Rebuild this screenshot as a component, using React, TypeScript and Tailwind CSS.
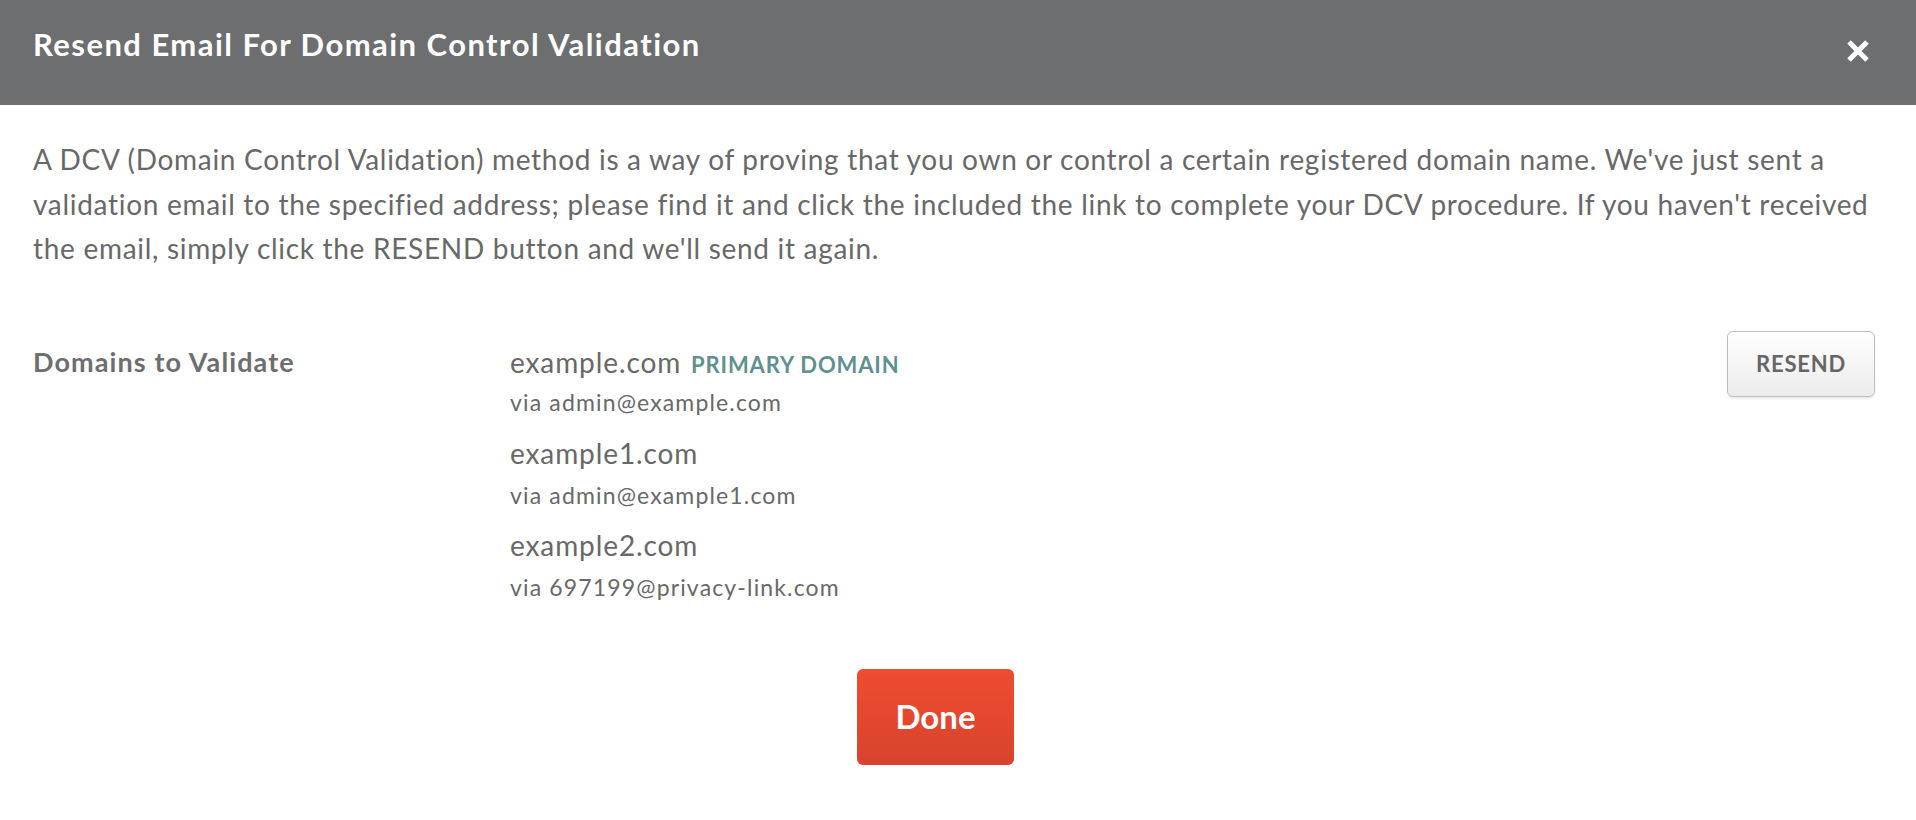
const domains = [
  { name: "example.com", via: "admin@example.com", primary: true },
  { name: "example1.com", via: "admin@example1.com", primary: false },
  { name: "example2.com", via: "697199@privacy-link.com", primary: false },
];

export default function App() {
  return (
    <div className="min-h-[820px] w-full bg-white font-['Lato',sans-serif] text-[#686868]">
      <header className="flex h-[105px] items-start justify-between bg-[#6d6e70] pl-[33px] pr-[46px]">
        <h1 className="pt-[25px] text-[31px] leading-[38px] font-bold tracking-[1.45px] text-white">
          Resend Email For Domain Control Validation
        </h1>
        <button className="mt-[39px] text-white" aria-label="Close">
          <svg width="24" height="24" viewBox="0 0 24 24">
            <path d="M3 3 L21 21 M21 3 L3 21" stroke="currentColor" strokeWidth="5" />
          </svg>
        </button>
      </header>

      <div className="px-[33px] pt-[32px]">
        <p className="text-[28px] leading-[44.5px] tracking-[0.7px]">
          A DCV (Domain Control Validation) method is a way of proving that you own or control a certain registered domain name. We've just sent a validation email to the specified address; please find it and click the included the link to complete your DCV procedure. If you haven't received the email, simply click the RESEND button and we'll send it again.
        </p>

        <div className="mt-[73px] flex items-start">
          <div className="w-[477px] text-[27px] leading-[36px] font-bold tracking-[1.1px] text-[#6d6e70]">
            Domains to Validate
          </div>
          <div className="flex flex-1 flex-col">
            {domains.map((d) => (
              <div key={d.name} className="flex h-[91.5px] flex-col">
                <div className="text-[28px] leading-[36px] tracking-[0.9px]">
                  {d.name}
                  {d.primary && (
                    <span className="ml-[10px] text-[22px] font-bold tracking-[0.85px] text-[#5f918f]">
                      PRIMARY DOMAIN
                    </span>
                  )}
                </div>
                <div
                  className={
                    d.primary
                      ? "mt-[5px] text-[23px] leading-[28px] tracking-[1.15px]"
                      : "mt-[10px] text-[23px] leading-[28px] tracking-[1.15px]"
                  }
                >
                  via {d.via}
                </div>
              </div>
            ))}
          </div>
          <button className="mr-[8px] mt-[-13px] h-[66px] w-[148px] rounded-[6px] border border-[#bdbdbd] bg-gradient-to-b from-white to-[#ececec] text-[22px] font-bold tracking-[0.8px] text-[#666] shadow-[0_2px_2px_rgba(0,0,0,0.08)]">
            RESEND
          </button>
        </div>

        <div className="mt-[51px] pl-[824px]">
          <button className="h-[96px] w-[157px] rounded-[6px] bg-gradient-to-b from-[#ef4c30] to-[#d8432d] text-[33px] font-bold text-white">
            Done
          </button>
        </div>
      </div>
    </div>
  );
}
